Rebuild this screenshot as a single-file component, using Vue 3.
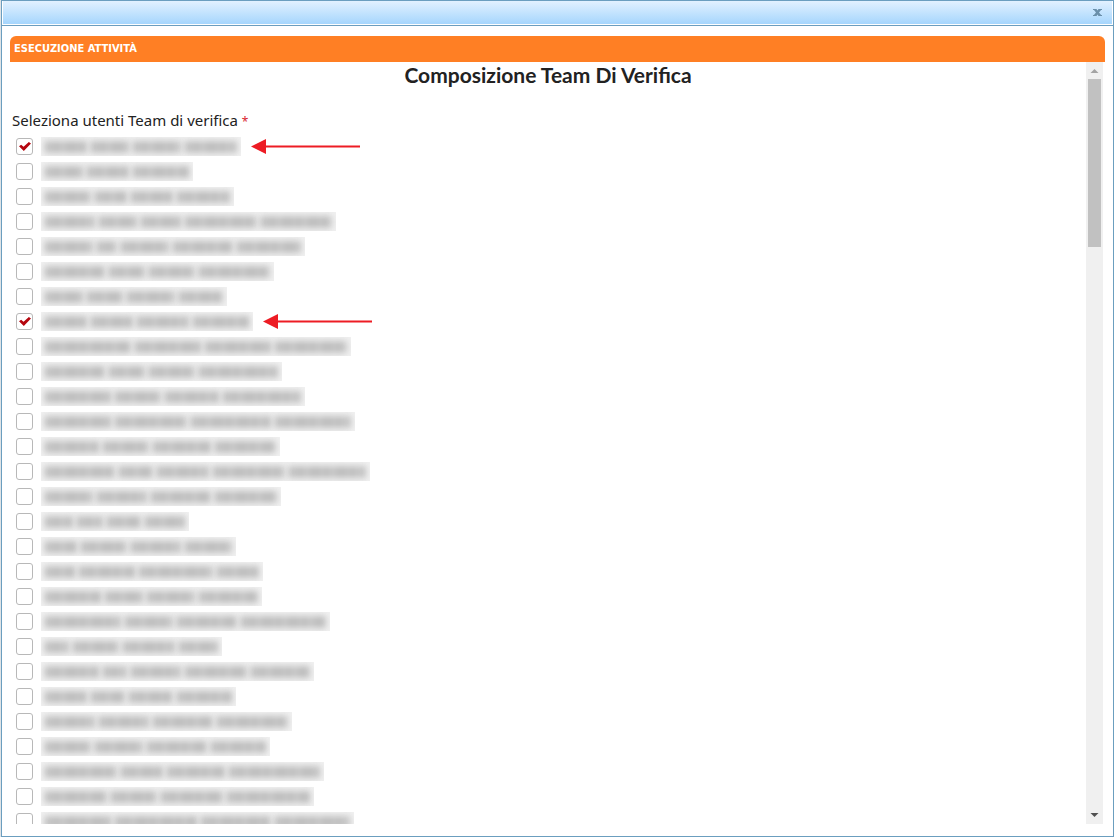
<template>
  <div class="window">
    <div class="title-bar">
      <button class="close-button" type="button" aria-label="Chiudi">
        <svg width="9" height="7" viewBox="0 0 9 7">
          <path d="M0 0h3.500l1 1.500 1-1.500H9v1h-.9L6 3.500 8.100 6H9v1H5.500l-1-1.500-1 1.500H0V6h.9L3 3.500.9 1H0z" />
        </svg>
      </button>
    </div>

    <div class="window-body">
      <header class="panel-header">ESECUZIONE ATTIVITÀ</header>

      <div class="scroll-area">
        <main class="content">
          <h1>Composizione Team Di Verifica</h1>

          <fieldset class="users">
            <legend>Seleziona utenti Team di verifica <span class="required">*</span></legend>

            <div v-for="(user, index) in users" :key="index" class="user-row">
              <input
                v-model="user.checked"
                class="check"
                type="checkbox"
                :aria-label="`Utente ${index + 1}`"
              />
              <!-- nome oscurato -->
              <span class="masked">
                <span
                  v-for="(width, i) in user.words"
                  :key="i"
                  class="masked-word"
                  :style="{ width: `${width}px` }"
                />
              </span>
              <svg v-if="user.arrow" class="arrow" width="109" height="15" viewBox="0 0 109 15">
                <path d="M0 7.500 15 0v15z" />
                <path d="M14 6.500h95v2H14z" />
              </svg>
            </div>
          </fieldset>
        </main>

        <div class="scrollbar">
          <svg class="scroll-arrow up" width="17" height="17" viewBox="0 0 17 17">
            <path d="M4.500 11h8L8.500 7z" />
          </svg>
          <div class="thumb" />
          <svg class="scroll-arrow down" width="17" height="17" viewBox="0 0 17 17">
            <path d="M4.500 6h8L8.500 10z" />
          </svg>
        </div>
      </div>
    </div>
  </div>
</template>

<script setup>
import { reactive } from 'vue'

// larghezze delle parole oscurate, in px
const users = reactive([
  { words: [42, 38, 48, 49], checked: true, arrow: true },
  { words: [38, 42, 53] },
  { words: [46, 32, 42, 50] },
  { words: [50, 38, 40, 72, 68] },
  { words: [48, 20, 48, 60, 61] },
  { words: [60, 36, 46, 68] },
  { words: [38, 36, 48, 41] },
  { words: [42, 42, 52, 53], checked: true, arrow: true },
  { words: [86, 66, 66, 69] },
  { words: [60, 36, 46, 76] },
  { words: [66, 46, 54, 75] },
  { words: [66, 72, 80, 73] },
  { words: [54, 46, 58, 58] },
  { words: [70, 34, 52, 72, 74] },
  { words: [48, 50, 60, 59] },
  { words: [28, 26, 34, 37] },
  { words: [32, 46, 50, 44] },
  { words: [30, 56, 74, 39] },
  { words: [56, 38, 48, 56] },
  { words: [76, 48, 60, 82] },
  { words: [24, 46, 52, 36] },
  { words: [54, 24, 50, 62, 56] },
  { words: [42, 34, 44, 52] },
  { words: [50, 50, 60, 68] },
  { words: [46, 48, 60, 52] },
  { words: [72, 42, 58, 88] },
  { words: [62, 46, 62, 80] },
  { words: [66, 82, 70, 72] },
])
</script>

<style>
body {
  margin: 0;
  background: #dfe3e6;
}
</style>

<style scoped>
.window {
  box-sizing: border-box;
  height: 100vh;
  margin-left: 1px;
  display: flex;
  flex-direction: column;
  border: 1px solid #6b9ebf;
  background: #fff;
  color: #222;
  font-family: "Noto Sans", "Open Sans", sans-serif;
}

.title-bar {
  flex: none;
  box-sizing: border-box;
  height: 24px;
  display: flex;
  align-items: center;
  justify-content: flex-end;
  padding-right: 10px;
  border: 1px solid #fff;
  border-top: 0;
  background: linear-gradient(#e2f1ff, #a6d6fd) padding-box;
  box-shadow: 0 1px 0 #6b9ebf;
}

.close-button {
  display: flex;
  padding: 0;
  border: none;
  background: none;
  cursor: pointer;
}

.close-button svg {
  fill: #6a8faa;
}

.window-body {
  flex: 1;
  min-height: 0;
  display: flex;
  flex-direction: column;
  padding: 11px 8px 12px;
}

.panel-header {
  flex: none;
  height: 26px;
  padding-left: 4px;
  border-radius: 6px 6px 0 0;
  background: #ff7f24;
  color: #fff;
  font-family: "DejaVu Sans Condensed", "DejaVu Sans", sans-serif;
  font-size: 11px;
  font-weight: 700;
  line-height: 25px;
}

.scroll-area {
  flex: 1;
  min-height: 0;
  display: flex;
  padding-right: 2px;
}

.content {
  flex: 1;
  min-width: 0;
  overflow: hidden;
}

h1 {
  margin: 0;
  font-family: Lato, "Noto Sans", sans-serif;
  font-size: 21px;
  font-weight: 700;
  line-height: 26px;
  text-align: center;
}

.users {
  margin: 0;
  padding: 0 0 0 6px;
  border: none;
}

legend {
  margin-left: -4px;
  padding: 22px 0 4px;
  font-size: 15px;
  line-height: 20px;
}

.required {
  color: #d9232e;
  font-size: 12px;
  line-height: 1;
}

.user-row {
  height: 25px;
  display: flex;
  align-items: center;
}

.check {
  appearance: none;
  flex: none;
  box-sizing: border-box;
  width: 17px;
  height: 17px;
  margin: 0 8px 0 0;
  border: 1px solid #b8b8b8;
  border-radius: 3px;
  background: #fff;
}

.check:checked::before {
  content: "";
  display: block;
  width: 12px;
  height: 9px;
  margin: 3px 2px;
  background: #b5060f;
  clip-path: polygon(0 48%, 18% 30%, 38% 52%, 82% 0, 100% 18%, 40% 100%);
}

.masked {
  display: flex;
  align-items: center;
  gap: 4px;
  height: 19px;
  padding: 0 4px;
  overflow: hidden;
  background: #f1f1f1;
}

.masked-word {
  box-sizing: content-box;
  height: 12px;
  background: repeating-linear-gradient(90deg, #b8b8b8 0 4px, #c6c6c6 4px 9px, #bcbcbc 9px 15px, #cacaca 15px 19px, #c0c0c0 19px 26px);
  filter: blur(3px);
}

.masked-word:last-child {
  padding-right: 3px;
}

.arrow {
  margin-left: 10px;
  fill: #ed1c24;
}

.scrollbar {
  flex: none;
  width: 17px;
  display: flex;
  flex-direction: column;
  background: #f0f0f0;
}

.scroll-arrow {
  flex: none;
  fill: #a3a3a3;
}

.down {
  margin-top: auto;
  fill: #505050;
}

.thumb {
  height: 22%;
  margin: 0 2px;
  background: #c1c1c1;
}
</style>
